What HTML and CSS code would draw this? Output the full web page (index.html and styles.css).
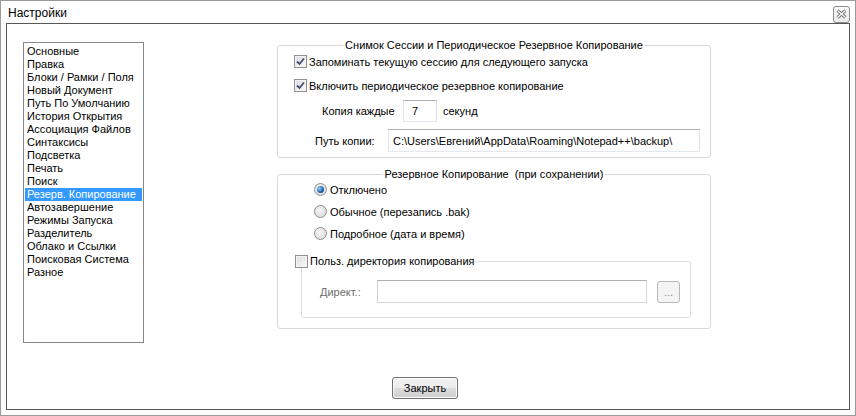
FILE: index.html
```html
<!DOCTYPE html>
<html lang="ru">
<head>
<meta charset="utf-8">
<title>Настройки</title>
<link rel="stylesheet" href="styles.css">
</head>
<body>
<div class="window">
  <div class="titlebar">
    <span class="title">Настройки</span>
    <span class="close-x">
      <svg width="11" height="10" viewBox="0 0 11 10"><path d="M1.5 1.5 L9.5 8.5 M9.5 1.5 L1.5 8.5" stroke="#6e6e6e" stroke-width="3" fill="none"/><path d="M1.5 1.5 L9.5 8.5 M9.5 1.5 L1.5 8.5" stroke="#fff" stroke-width="1.2" fill="none"/></svg>
    </span>
  </div>
  <div class="client">
    <div class="main">
      <ul class="list">
        <li>Основные</li>
        <li>Правка</li>
        <li>Блоки / Рамки / Поля</li>
        <li>Новый Документ</li>
        <li>Путь По Умолчанию</li>
        <li>История Открытия</li>
        <li>Ассоциация Файлов</li>
        <li>Синтаксисы</li>
        <li>Подсветка</li>
        <li>Печать</li>
        <li>Поиск</li>
        <li class="selected">Резерв. Копирование</li>
        <li>Автозавершение</li>
        <li>Режимы Запуска</li>
        <li>Разделитель</li>
        <li>Облако и Ссылки</li>
        <li>Поисковая Система</li>
        <li>Разное</li>
      </ul>
      <div class="panel">
        <fieldset class="group g1">
          <legend class="centered">Снимок Сессии и Периодическое Резервное Копирование</legend>
          <div class="row r1"><span class="cb checked"><svg width="9" height="9" viewBox="0 0 9 9"><path d="M1 4.5 L3.5 7 L8 1.5" stroke="#3d4f7a" stroke-width="1.8" fill="none"/></svg></span><span>Запоминать текущую сессию для следующего запуска</span></div>
          <div class="row r2"><span class="cb checked"><svg width="9" height="9" viewBox="0 0 9 9"><path d="M1 4.5 L3.5 7 L8 1.5" stroke="#3d4f7a" stroke-width="1.8" fill="none"/></svg></span><span>Включить периодическое резервное копирование</span></div>
          <div class="row r3"><span class="lbl-copy">Копия каждые</span><span class="edit e-sec">7</span><span class="lbl-sec">секунд</span></div>
          <div class="row r4"><span class="lbl-path">Путь копии:</span><span class="edit e-path">C:\Users\Евгений\AppData\Roaming\Notepad++\backup\</span></div>
        </fieldset>
        <fieldset class="group g2">
          <legend class="centered">Резервное Копирование&nbsp; (при сохранении)</legend>
          <div class="row rad rad1"><span class="radio on"><span class="dot"></span></span><span>Отключено</span></div>
          <div class="row rad rad2"><span class="radio"></span><span>Обычное (перезапись .bak)</span></div>
          <div class="row rad rad3"><span class="radio"></span><span>Подробное (дата и время)</span></div>
          <fieldset class="group inner">
            <legend class="cb-legend"><span class="cb"></span><span>Польз. директория копирования</span></legend>
            <div class="row r-dir"><span class="lbl-dir">Директ.:</span><span class="edit e-dir disabled"></span><span class="btn-dots">...</span></div>
          </fieldset>
        </fieldset>
      </div>
    </div>
    <div class="footer">
      <button class="btn-close">Закрыть</button>
    </div>
  </div>
</div>
</body>
</html>
```

FILE: styles.css
```css
html, body {
  margin: 0;
  padding: 0;
  background: #fff;
}
body {
  font-family: "Liberation Sans", Arial, sans-serif;
  font-size: 11px;
  color: #000;
}
.window {
  width: 856px;
  height: 416px;
  box-sizing: border-box;
  border: 1px solid #9a9a9a;
  background: #fbfbfb;
  display: flex;
  flex-direction: column;
}
.titlebar {
  height: 22px;
  display: flex;
  align-items: center;
  justify-content: space-between;
  padding: 0 5px 0 7px;
  background: #fff;
}
.title {
  font-size: 12px;
  color: #000;
  margin-top: 1px;
}
.close-x {
  width: 15px;
  height: 15px;
  border: 1px solid #8c8c8c;
  border-radius: 3px;
  display: flex;
  align-items: center;
  justify-content: center;
  background: linear-gradient(#fbfbfb, #ececec);
  margin-top: 4px;
}
.client {
  flex: 1;
  margin: 0 5px 5px;
  border: 1px solid #575757;
  background: #fff;
  display: flex;
  flex-direction: column;
  padding: 15px 0 0 16px;
}
.main {
  display: flex;
  align-items: flex-start;
}
.list {
  list-style: none;
  margin: 3px 0 0;
  padding: 2px 1px 0;
  width: 117px;
  height: 297px;
  border: 1px solid #828790;
  box-sizing: content-box;
}
.list li {
  height: 13px;
  line-height: 13px;
  padding-left: 2px;
  white-space: nowrap;
}
.list li.selected {
  background: #3399ff;
  color: #fff;
}
.panel {
  margin-left: 133px;
  width: 434px;
  display: flex;
  flex-direction: column;
}
.group {
  margin: 0;
  border: 1px solid #d9d9d9;
  border-radius: 3px;
  padding: 0;
  min-width: 0;
}
legend {
  font-size: 11px;
  line-height: 13px;
  white-space: nowrap;
}
legend.centered {
  margin: 0 auto;
  padding: 0 2px;
}
.g1 {
  padding: 0 0 5px;
}
.g2 {
  margin-top: 10px;
  padding: 0 0 10px;
}
.row {
  display: flex;
  align-items: center;
  white-space: nowrap;
}
.r1 { height: 13px; margin-top: 3px; padding-left: 16px; }
.r2 { height: 13px; margin-top: 11px; padding-left: 16px; }
.r3 { height: 22px; margin-top: 8px; padding-left: 44px; }
.r4 { height: 23px; margin-top: 7px; padding-left: 37px; }
.cb {
  width: 11px;
  height: 11px;
  border: 1px solid #8e8f8f;
  background: linear-gradient(135deg, #dcdcdc, #fbfbfb);
  box-shadow: inset 0 0 0 1px #f4f4f4;
  display: inline-flex;
  align-items: center;
  justify-content: center;
  margin-right: 2px;
  flex: none;
}
.edit {
  box-sizing: border-box;
  height: 100%;
  border: 1px solid;
  border-color: #abadb3 #dbdfe6 #e3e9ef #e2e3ea;
  display: inline-flex;
  align-items: center;
  padding-left: 5px;
  background: #fff;
}
.lbl-copy { width: 81px; }
.e-sec { width: 34px; padding-left: 8px; }
.lbl-sec { margin-left: 6px; }
.lbl-path { width: 73px; }
.e-path { width: 312px; padding-left: 4px; }
.rad { height: 13px; padding-left: 36px; }
.rad1 { margin-top: 2px; }
.rad2 { margin-top: 9px; }
.rad3 { margin-top: 9px; }
.radio {
  box-sizing: border-box;
  width: 13px;
  height: 13px;
  border-radius: 50%;
  border: 1px solid #8e8f8f;
  background: radial-gradient(circle at 40% 40%, #f6f6f6, #d4d4d4);
  margin-right: 3px;
  display: inline-flex;
  align-items: center;
  justify-content: center;
  flex: none;
}
.radio .dot {
  width: 7px;
  height: 7px;
  border-radius: 50%;
  background: radial-gradient(circle at 35% 35%, #8fd4fb, #1d5fa8 60%, #0d3b7a);
}
.inner {
  margin: 15px 19px 0 23px;
  padding: 0 0 14px;
  border-color: #dedede;
}
.cb-legend {
  display: flex;
  align-items: center;
  margin-left: -7px;
  padding: 0;
  height: 13px;
}
.r-dir { height: 23px; margin-top: 12px; padding-left: 18px; }
.lbl-dir { width: 57px; color: #6d6d6d; }
.e-dir { width: 270px; border-color: #adadad #d9d9d9 #d9d9d9 #d0d0d0; }
.btn-dots {
  box-sizing: border-box;
  width: 23px;
  height: 22px;
  margin-left: 10px;
  border: 1px solid #b5b8bb;
  border-radius: 3px;
  background: #f4f4f4;
  color: #8a8a8a;
  display: inline-flex;
  align-items: flex-end;
  justify-content: center;
  padding-bottom: 4px;
  font-size: 11px;
  line-height: 11px;
}
.footer {
  display: flex;
  padding-left: 369px;
  margin-top: 34px;
}
.btn-close {
  box-sizing: border-box;
  width: 66px;
  height: 22px;
  border: 1px solid #707070;
  border-radius: 3px;
  background: linear-gradient(#f2f2f2 0%, #ebebeb 50%, #dddddd 51%, #cfcfcf 100%);
  box-shadow: inset 0 0 0 1px #fcfcfc;
  font-family: "Liberation Sans", Arial, sans-serif;
  font-size: 11px;
  color: #000;
  padding: 0;
}
```
